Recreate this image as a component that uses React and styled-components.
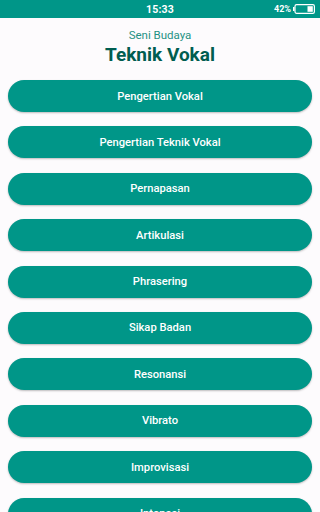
import React from 'react';
import styled, { createGlobalStyle } from 'styled-components';

const topics = [
	'Pengertian Vokal',
	'Pengertian Teknik Vokal',
	'Pernapasan',
	'Artikulasi',
	'Phrasering',
	'Sikap Badan',
	'Resonansi',
	'Vibrato',
	'Improvisasi',
	'Intonasi',
];

function Battery() {
	return (
		<svg width="22" height="10" viewBox="0 0 22 10">
			<rect x="0" y="3" width="1.5" height="4" fill="#fff" />
			<rect x="2" y="0.6" width="19.4" height="8.8" rx="1.6" fill="none" stroke="#fff" strokeWidth="1.2" />
			<rect x="14.5" y="2.2" width="5.3" height="5.6" fill="#fff" />
		</svg>
	);
}

function App() {
	return (
		<>
			<GlobalStyle />
			<Screen>
				<StatusBar>
					<Time>15:33</Time>
					<StatusRight>
						<span>42%</span>
						<Battery />
					</StatusRight>
				</StatusBar>
				<Header>
					<Subtitle>Seni Budaya</Subtitle>
					<Title>Teknik Vokal</Title>
				</Header>
				<Menu>
					{topics.map((topic) => (
						<MenuButton key={topic}>{topic}</MenuButton>
					))}
				</Menu>
			</Screen>
		</>
	);
}

export default App;

const GlobalStyle = createGlobalStyle`
	html, body {
		margin: 0;
		padding: 0;
		background: #fdfbfd;
	}
	body {
		font-family: Roboto, 'Noto Sans', sans-serif;
	}
`;
const Screen = styled.div`
	width: 100%;
	height: 512px;
	overflow: hidden;
	background: #fdfbfd;
`;
const StatusBar = styled.div`
	position: relative;
	height: 18px;
	background-color: #009688;
	color: #fff;
	display: flex;
	align-items: center;
	justify-content: center;
	font-weight: 700;
`;
const Time = styled.span`
	font-size: 10.5px;
	letter-spacing: 0.2px;
`;
const StatusRight = styled.div`
	position: absolute;
	right: 5px;
	top: 0;
	height: 18px;
	display: flex;
	align-items: center;
	gap: 2px;
	font-size: 9px;
`;
const Header = styled.div`
	display: flex;
	flex-direction: column;
	align-items: center;
	padding-top: 10px;
	height: 52px;
`;
const Subtitle = styled.div`
	font-size: 11.5px;
	color: #1f9284;
	line-height: 14px;
`;
const Title = styled.h1`
	margin: 2px 0 0;
	font-size: 19px;
	font-weight: 700;
	color: #005d50;
	line-height: 22px;
`;
const Menu = styled.div`
	display: flex;
	flex-direction: column;
	gap: 14.4px;
	padding: 0 8px;
`;
const MenuButton = styled.button`
	flex-shrink: 0;
	height: 32px;
	border: none;
	border-radius: 16px;
	background-color: #009688;
	color: #fff;
	font-family: Roboto, sans-serif;
	font-size: 11.2px;
	font-weight: 500;
	box-shadow: 0 1px 2px rgba(0, 0, 0, 0.25);
	cursor: pointer;
`;
